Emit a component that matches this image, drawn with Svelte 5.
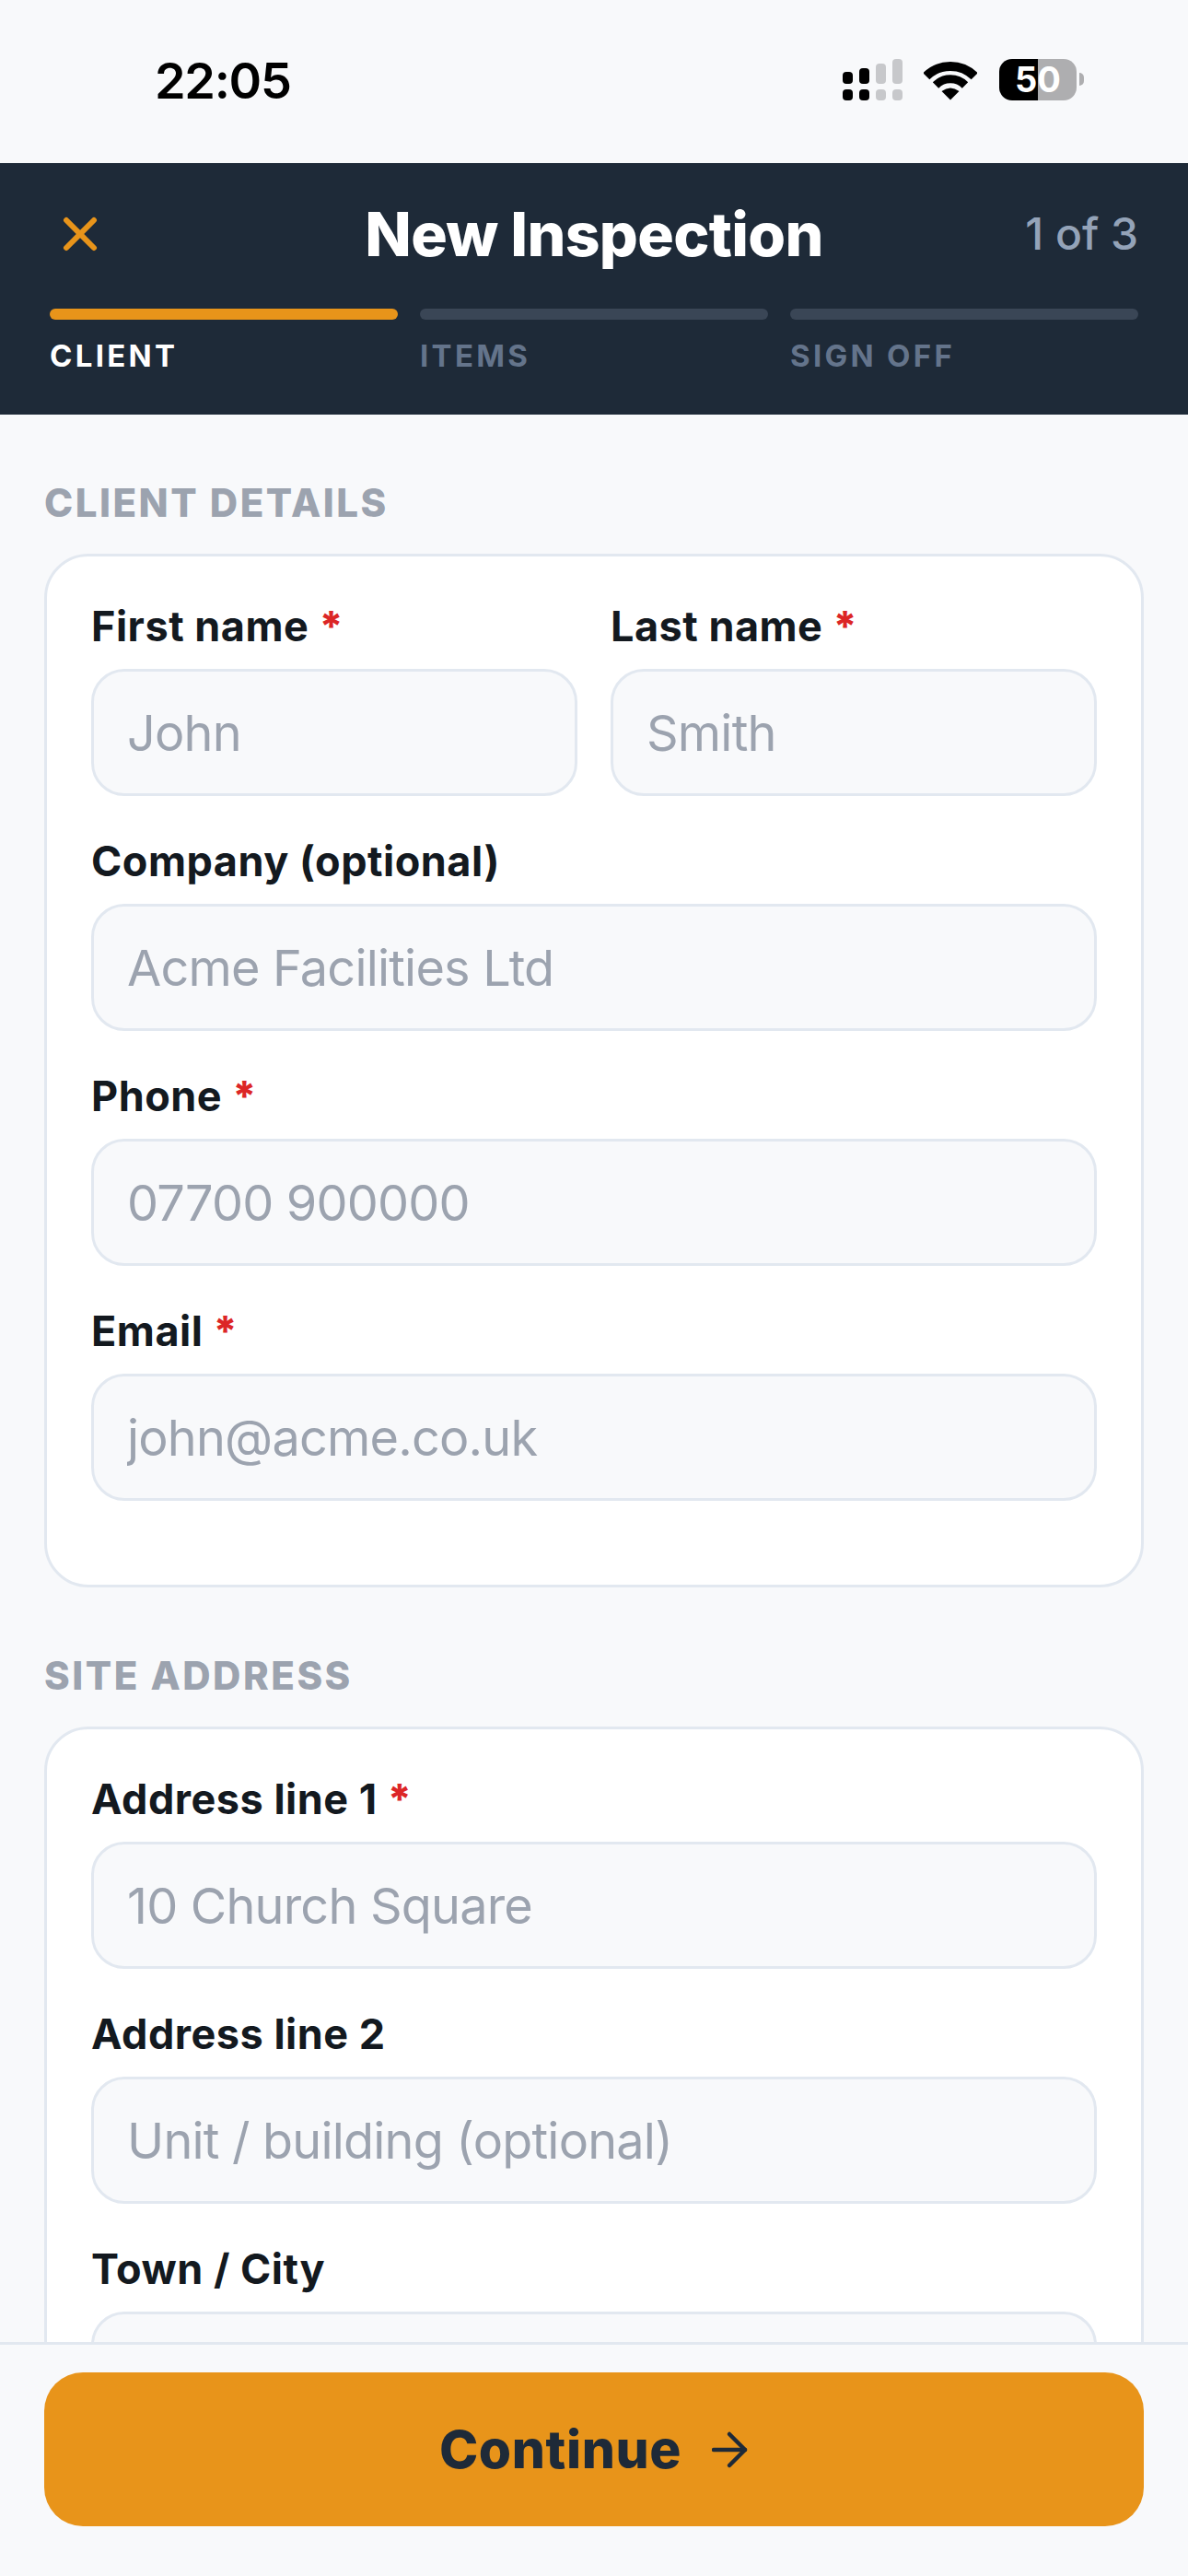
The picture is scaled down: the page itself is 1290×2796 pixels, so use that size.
<script lang="ts">
    const steps = [
        { name: 'CLIENT', active: true },
        { name: 'ITEMS', active: false },
        { name: 'SIGN OFF', active: false }
    ]
</script>

<div class="phone">
    <div class="statusbar">
        <span class="time">22:05</span>
        <div class="status-icons">
            <svg class="signal" width="65" height="45" viewBox="0 0 65 45">
                <g fill="#000">
                    <rect x="0" y="14" width="11" height="13" rx="4" />
                    <rect x="0" y="33" width="11" height="12" rx="4" />
                    <rect x="18" y="10" width="11" height="17" rx="4" />
                    <rect x="18" y="33" width="11" height="12" rx="4" />
                </g>
                <g fill="#c7c8cb">
                    <rect x="36" y="5" width="11" height="22" rx="4" />
                    <rect x="36" y="33" width="11" height="12" rx="4" />
                    <rect x="54" y="0" width="11" height="27" rx="4" />
                    <rect x="54" y="33" width="11" height="12" rx="4" />
                </g>
            </svg>
            <svg class="wifi" width="58" height="44" viewBox="0 0 58 44">
                <g fill="none" stroke="#000" stroke-linejoin="round">
                    <path d="M2.8 17.8 A37 37 0 0 1 55.2 17.8" stroke-width="10" />
                    <path d="M13 27.5 A22.5 22.5 0 0 1 45 27.5" stroke-width="9" />
                </g>
                <path d="M29 43.5 L19.5 34 Q29 27 38.5 34 Z" fill="#000" />
            </svg>
            <div class="battery"><span>50</span></div>
            <div class="battery-nub"></div>
        </div>
    </div>

    <header class="topbar">
        <div class="title-row">
            <svg class="close" width="60" height="60" viewBox="0 0 24 24" fill="none" stroke="#e8941a" stroke-width="2.4" stroke-linecap="round">
                <path d="M18 6 6 18" />
                <path d="m6 6 12 12" />
            </svg>
            <h1>New Inspection</h1>
            <span class="count">1 of 3</span>
        </div>
        <div class="steps">
            {#each steps as step}
                <div class="step" class:active={step.active}>
                    <div class="bar"></div>
                    <div class="step-name">{step.name}</div>
                </div>
            {/each}
        </div>
    </header>

    <main class="content">
        <h2>CLIENT DETAILS</h2>
        <section class="card">
            <div class="two-col">
                <div class="field">
                    <label for="first">First name <span class="req">*</span></label>
                    <input id="first" placeholder="John" />
                </div>
                <div class="field">
                    <label for="last">Last name <span class="req">*</span></label>
                    <input id="last" placeholder="Smith" />
                </div>
            </div>
            <div class="field">
                <label for="company">Company (optional)</label>
                <input id="company" placeholder="Acme Facilities Ltd" />
            </div>
            <div class="field">
                <label for="phone">Phone <span class="req">*</span></label>
                <input id="phone" placeholder="07700 900000" />
            </div>
            <div class="field">
                <label for="email">Email <span class="req">*</span></label>
                <input id="email" placeholder="john@acme.co.uk" />
            </div>
        </section>

        <h2 class="second">SITE ADDRESS</h2>
        <section class="card">
            <div class="field">
                <label for="addr1">Address line 1 <span class="req">*</span></label>
                <input id="addr1" placeholder="10 Church Square" />
            </div>
            <div class="field">
                <label for="addr2">Address line 2</label>
                <input id="addr2" placeholder="Unit / building (optional)" />
            </div>
            <div class="field">
                <label for="town">Town / City</label>
                <input id="town" />
            </div>
        </section>
    </main>

    <footer class="footer">
        <button class="continue">
            Continue
            <svg width="40" height="42" viewBox="2 0 40 42" fill="none" stroke="#1e2a38" stroke-width="4.5" stroke-linecap="round" stroke-linejoin="round">
                <path d="M4 21h34" />
                <path d="M21 4l17 17-17 17" />
            </svg>
        </button>
    </footer>
</div>

<style>
    :global(body) {
        margin: 0;
    }

    * {
        box-sizing: border-box;
    }

    .phone {
        width: 1290px;
        height: 2796px;
        display: flex;
        flex-direction: column;
        overflow: hidden;
        background: #f8f9fb;
        font-family: Inter, "Liberation Sans", sans-serif;
    }

    .statusbar {
        height: 177px;
        flex: none;
        display: flex;
        justify-content: space-between;
        padding: 64px 113px 0 168px;
    }

    .time {
        font-size: 54px;
        font-weight: 600;
        line-height: 48px;
        letter-spacing: -1.3px;
        color: #000;
    }

    .status-icons {
        display: flex;
        align-items: flex-start;
    }

    .signal {
        margin-right: 23px;
    }

    .wifi {
        margin: 1px 24px 0 0;
    }

    .battery {
        width: 84px;
        height: 45px;
        border-radius: 14px;
        background: linear-gradient(90deg, #000 50%, #aeaeb0 50%);
        color: #fff;
        font-size: 38px;
        font-weight: 700;
        line-height: 45px;
        text-align: center;
    }

    .battery-nub {
        width: 5px;
        height: 14px;
        margin: 15px 0 0 3px;
        border-radius: 0 5px 5px 0;
        background: #aeaeb0;
    }

    .topbar {
        flex: none;
        height: 273px;
        background: #1e2a38;
        padding: 36px 54px 0;
    }

    .title-row {
        display: grid;
        grid-template-columns: 1fr auto 1fr;
        align-items: center;
        height: 81px;
        margin-bottom: 41px;
    }

    .close {
        margin-left: 3px;
    }

    h1 {
        margin: 0;
        font-size: 66px;
        font-weight: 800;
        color: #fff;
        letter-spacing: -0.7px;
    }

    .count {
        justify-self: end;
        font-size: 48px;
        font-weight: 500;
        color: #94a3b8;
    }

    .steps {
        display: grid;
        grid-template-columns: repeat(3, 1fr);
        gap: 24px;
    }

    .bar {
        height: 12px;
        border-radius: 6px;
        background: #3a4656;
    }

    .step-name {
        margin-top: 19px;
        font-size: 33px;
        line-height: 40px;
        font-weight: 700;
        letter-spacing: 3.3px;
        color: #64748b;
    }

    .step.active .bar {
        background: #e8941a;
    }

    .step.active .step-name {
        color: #fff;
    }

    .content {
        flex: 1;
        min-height: 0;
        overflow: hidden;
        padding: 66px 48px 0;
    }

    h2 {
        margin: 0 0 25px;
        font-size: 42px;
        line-height: 60px;
        font-weight: 800;
        letter-spacing: 2.5px;
        color: #9ca3af;
    }

    h2.second {
        margin-top: 66px;
    }

    .card {
        background: #fff;
        border: 3px solid #e2e8f0;
        border-radius: 48px;
        padding: 48px;
    }

    .two-col {
        display: grid;
        grid-template-columns: 1fr 1fr;
        gap: 36px;
    }

    .field {
        margin-bottom: 43px;
    }

    label {
        display: block;
        margin-bottom: 18px;
        font-size: 45px;
        line-height: 56px;
        font-weight: 700;
        letter-spacing: 0.5px;
        color: #13191f;
    }

    .req {
        color: #dc2626;
        font-weight: 800;
    }

    input {
        display: block;
        width: 100%;
        height: 138px;
        padding: 0 36px;
        background: #f8f9fb;
        border: 3px solid #e2e8f0;
        border-radius: 36px;
        outline: none;
        font-family: inherit;
        font-size: 54px;
        letter-spacing: -0.8px;
    }

    input::placeholder {
        color: #9ca3af;
        opacity: 1;
    }

    .footer {
        flex: none;
        height: 254px;
        background: #f8f9fb;
        border-top: 3px solid #e2e8f0;
        padding: 30px 48px 0;
    }

    .continue {
        width: 100%;
        height: 167px;
        display: flex;
        align-items: center;
        justify-content: center;
        gap: 33px;
        border: none;
        border-radius: 42px;
        background: #e8941a;
        color: #1e2a38;
        font-family: inherit;
        font-size: 57px;
        font-weight: 800;
        letter-spacing: 0.6px;
    }
</style>
